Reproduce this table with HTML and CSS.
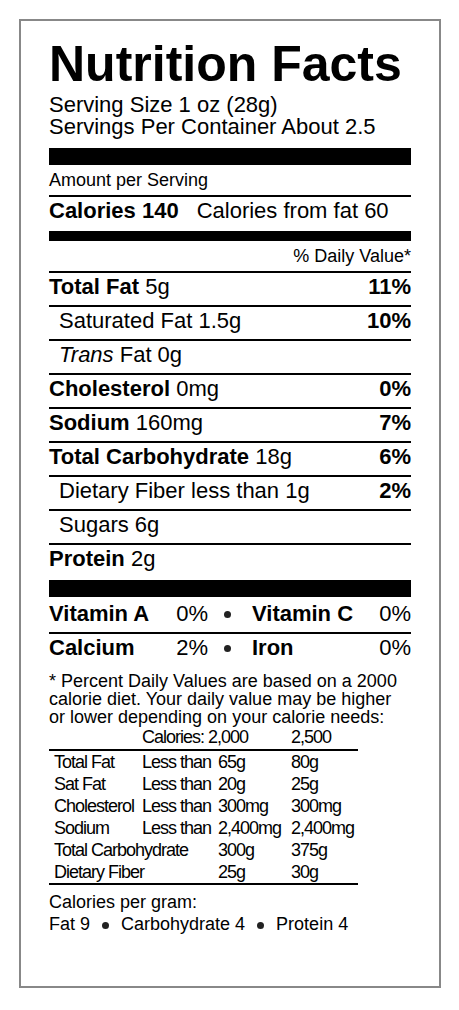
FILE: index.html
```html
<!DOCTYPE html>
<html lang="en">
<head>
  <meta charset="UTF-8" />
  <meta name="viewport" content="width=device-width, initial-scale=1.0"/>
  <title>Nutrition Facts</title>
  <link rel="stylesheet" href="styles.css">
</head>
<body>
  <div class="label">
    <h1>Nutrition Facts</h1>
    <div class="serving">
      <div>Serving Size 1 oz (28g)</div>
      <div>Servings Per Container About 2.5</div>
    </div>

    <div class="bar bar-lg"></div>
    <div class="small-row">Amount per Serving</div>
    <div class="calories"><b>Calories 140</b><span class="from-fat">Calories from fat 60</span></div>
    <div class="bar bar-md"></div>
    <div class="small-row right">% Daily Value*</div>

    <div class="row"><span><b>Total Fat</b> 5g</span><b>11%</b></div>
    <div class="row sub"><span>Saturated Fat 1.5g</span><b>10%</b></div>
    <div class="row sub"><span><i>Trans</i> Fat 0g</span></div>
    <div class="row"><span><b>Cholesterol</b> 0mg</span><b>0%</b></div>
    <div class="row"><span><b>Sodium</b> 160mg</span><b>7%</b></div>
    <div class="row"><span><b>Total Carbohydrate</b> 18g</span><b>6%</b></div>
    <div class="row sub"><span>Dietary Fiber less than 1g</span><b>2%</b></div>
    <div class="row sub"><span>Sugars 6g</span></div>
    <div class="row last"><span><b>Protein</b> 2g</span></div>

    <div class="bar bar-lg no-gap"></div>
    <div class="vit-row first">
      <div class="vit"><b>Vitamin A</b><span>0%</span></div>
      <div class="vit-sep"><span class="dot"></span></div>
      <div class="vit"><b>Vitamin C</b><span>0%</span></div>
    </div>
    <div class="vit-row">
      <div class="vit"><b>Calcium</b><span>2%</span></div>
      <div class="vit-sep"><span class="dot"></span></div>
      <div class="vit"><b>Iron</b><span>0%</span></div>
    </div>

    <p class="footnote">* Percent Daily Values are based on a 2000<br>calorie diet. Your daily value may be higher<br>or lower depending on your calorie needs:</p>

    <div class="dv-table">
      <div class="dv-row dv-head">
        <span></span><span class="span2">Calories: 2,000</span><span>2,500</span>
      </div>
      <div class="dv-row"><span>Total Fat</span><span>Less than</span><span>65g</span><span>80g</span></div>
      <div class="dv-row"><span>Sat Fat</span><span>Less than</span><span>20g</span><span>25g</span></div>
      <div class="dv-row"><span>Cholesterol</span><span>Less than</span><span>300mg</span><span>300mg</span></div>
      <div class="dv-row"><span>Sodium</span><span>Less than</span><span>2,400mg</span><span>2,400mg</span></div>
      <div class="dv-row"><span class="span2">Total Carbohydrate</span><span>300g</span><span>375g</span></div>
      <div class="dv-row"><span class="span2">Dietary Fiber</span><span>25g</span><span>30g</span></div>
    </div>

    <div class="per-gram">
      <div>Calories per gram:</div>
      <div>Fat 9<span class="dot"></span>Carbohydrate 4<span class="dot"></span>Protein 4</div>
    </div>
  </div>
</body>
</html>
```

FILE: styles.css
```css
html, body {
  margin: 0;
  padding: 0;
  background: #fff;
  color: #000;
  font-family: "Liberation Sans", Arial, Helvetica, sans-serif;
}
.label {
  box-sizing: border-box;
  width: 422px;
  height: 969px;
  margin: 19px;
  border: 2px solid #888;
  padding: 18px 28px 0;
}
.label h1 {
  margin: 0;
  font-size: 50px;
  line-height: 50px;
  font-weight: bold;
}
.serving {
  margin-top: 5px;
  font-size: 22px;
  line-height: 22px;
}
.bar {
  background: #000;
}
.bar-lg {
  height: 17px;
  margin-top: 10px;
}
.bar-lg.no-gap {
  margin-top: 0;
}
.bar-md {
  height: 10px;
}
.small-row {
  font-size: 18px;
  line-height: 18px;
  padding: 6px 0;
  border-bottom: 2px solid #000;
}
.small-row.right {
  text-align: right;
}
.calories {
  font-size: 22px;
  line-height: 22px;
  padding: 3px 0 9px;
}
.from-fat {
  margin-left: 18px;
}
.row {
  display: flex;
  justify-content: space-between;
  font-size: 22px;
  line-height: 22px;
  padding: 3px 0 7px;
  border-bottom: 2px solid #000;
}
.row.sub {
  padding-left: 10px;
}
.row.last {
  border-bottom: none;
  padding-bottom: 10px;
}
.vit-row {
  display: grid;
  grid-template-columns: 159px 44px 1fr;
  font-size: 22px;
  line-height: 22px;
  padding: 3px 0 7px;
}
.vit-row.first {
  padding-top: 6px;
  padding-bottom: 7px;
  border-bottom: 2px solid #000;
}
.vit {
  display: flex;
  justify-content: space-between;
}
.vit-sep {
  padding-left: 16px;
}
.dot {
  display: inline-block;
  width: 7px;
  height: 7px;
  vertical-align: 3px;
  border-radius: 50%;
  background: #222;
  filter: blur(0.6px);
}
.footnote {
  margin: 6px 0 0;
  font-size: 18px;
  line-height: 18px;
}
.dv-table {
  width: 309px;
  font-size: 18px;
  line-height: 22px;
  letter-spacing: -1px;
  border-bottom: 2px solid #000;
}
.dv-row {
  display: grid;
  grid-template-columns: 93px 76px 73px 67px;
  white-space: nowrap;
}
.dv-row span:first-child {
  padding-left: 5px;
}
.dv-head {
  border-bottom: 2px solid #000;
  padding-bottom: 1px;
}
.dv-head span:first-child {
  padding-left: 0;
}
.span2 {
  grid-column: span 2;
}
.dv-head .span2 {
  grid-column: 2 / span 2;
}
.per-gram {
  margin-top: 6px;
  font-size: 18px;
  line-height: 22px;
}
.per-gram .dot {
  margin: 0 12px;
  vertical-align: 1.5px;
}
```
